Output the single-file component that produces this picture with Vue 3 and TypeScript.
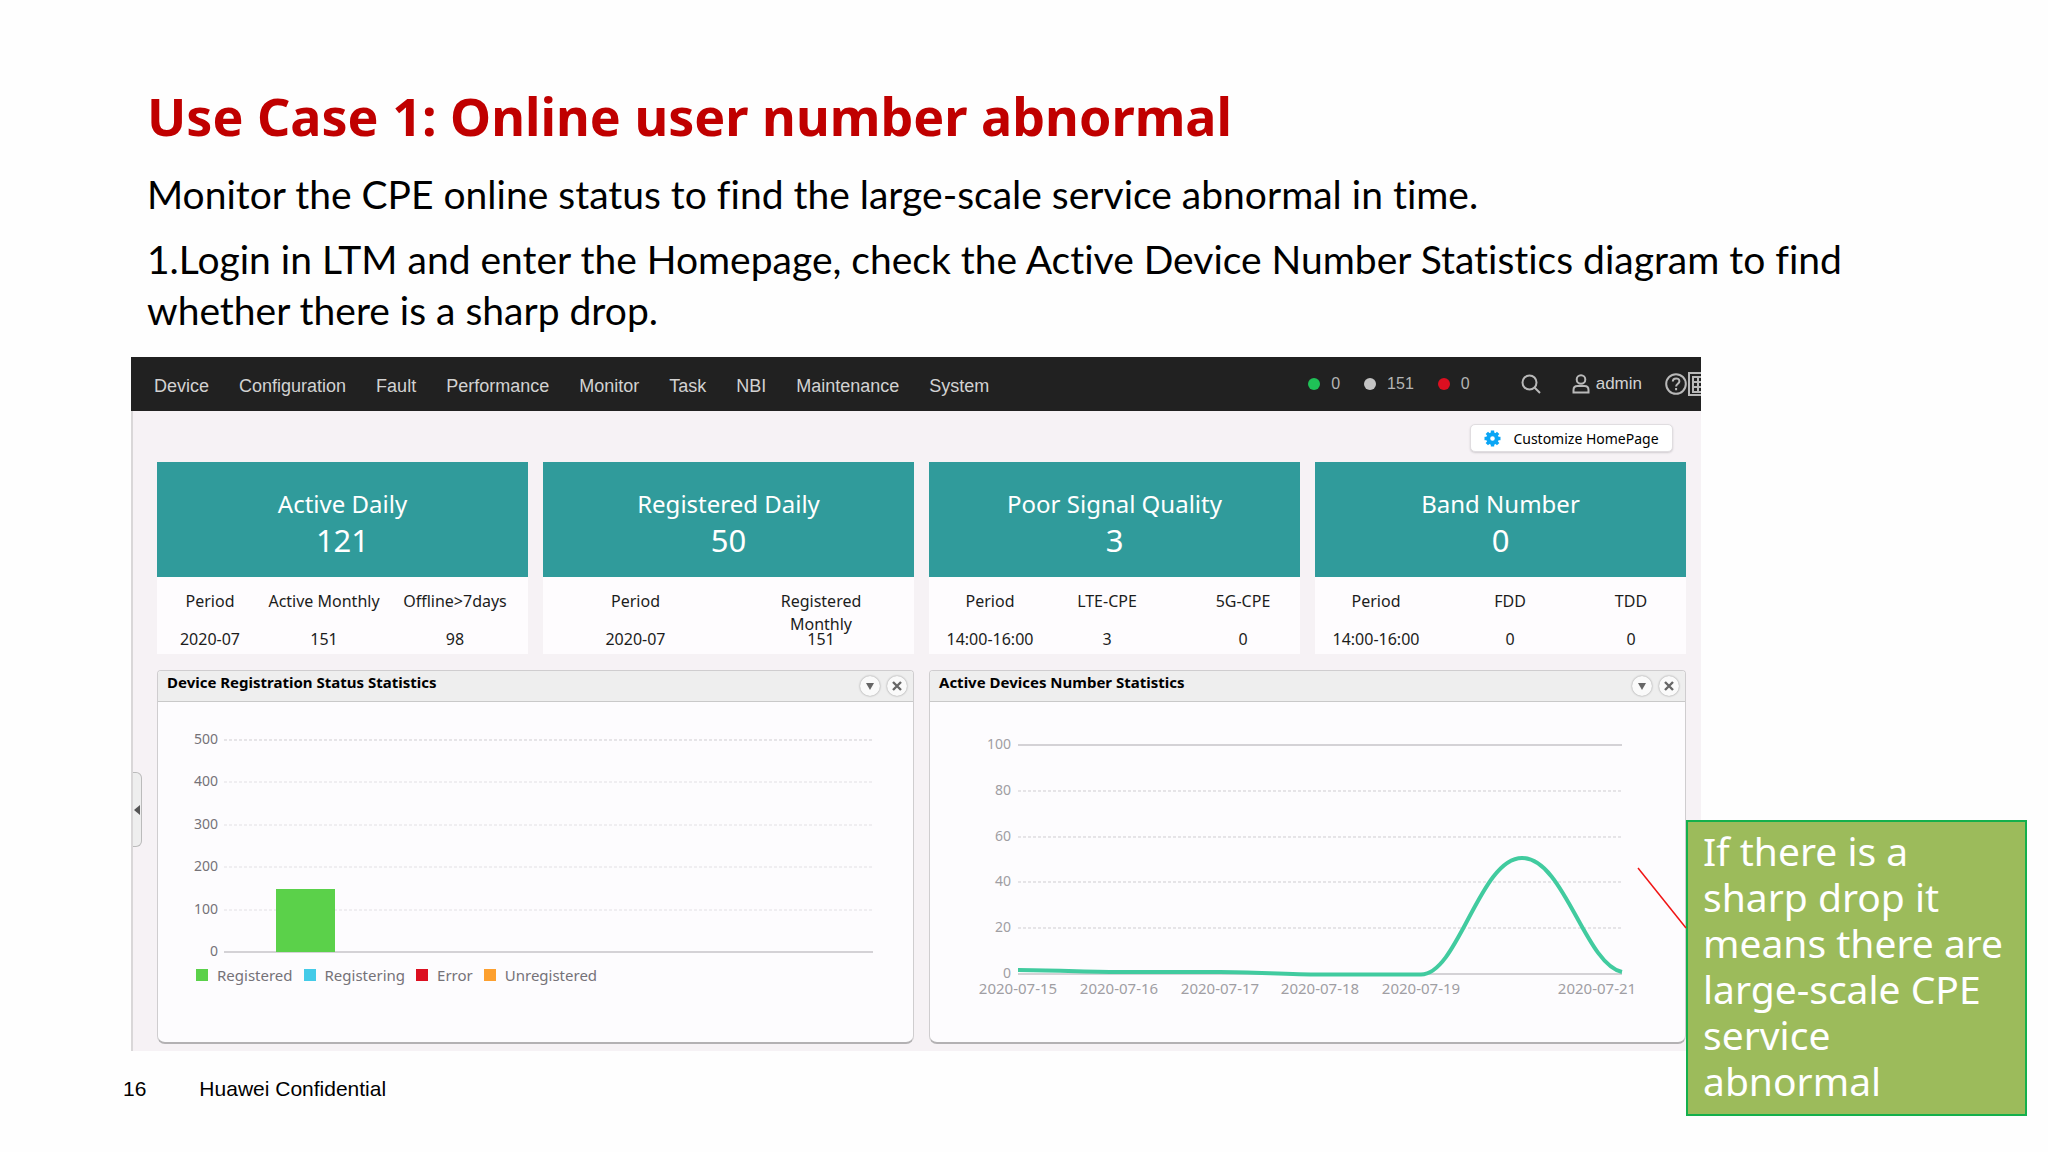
<script setup lang="ts">
interface Card {
  title: string
  total: number
  lead: number
  cols: { label: string; value: string; share: number }[]
}

const menu = ['Device', 'Configuration', 'Fault', 'Performance', 'Monitor', 'Task', 'NBI', 'Maintenance', 'System']

const alarms = [
  { color: '#1fc157', count: 0 },
  { color: '#c4c4c4', count: 151 },
  { color: '#dc0f20', count: 0 },
]

/* lead and share are parts of a card that is 371 units wide */
const CARD_UNITS = 371
const cards: Card[] = [
  {
    title: 'Active Daily',
    total: 121,
    lead: 0,
    cols: [
      { label: 'Period', value: '2020-07', share: 106 },
      { label: 'Active Monthly', value: '151', share: 122 },
      { label: 'Offline>7days', value: '98', share: 140 },
    ],
  },
  {
    title: 'Registered Daily',
    total: 50,
    lead: 0,
    cols: [
      { label: 'Period', value: '2020-07', share: 185 },
      { label: 'Registered Monthly', value: '151', share: 186 },
    ],
  },
  {
    title: 'Poor Signal Quality',
    total: 3,
    lead: 16,
    cols: [
      { label: 'Period', value: '14:00-16:00', share: 90 },
      { label: 'LTE-CPE', value: '3', share: 144 },
      { label: '5G-CPE', value: '0', share: 128 },
    ],
  },
  {
    title: 'Band Number',
    total: 0,
    lead: 0,
    cols: [
      { label: 'Period', value: '14:00-16:00', share: 122 },
      { label: 'FDD', value: '0', share: 146 },
      { label: 'TDD', value: '0', share: 96 },
    ],
  },
]

const pct = (n: number, of: number) => `${(n / of) * 100}%`
const tableUnits = (c: Card) => c.cols.reduce((sum, col) => sum + col.share, 0)

/* Registration bar chart */
const barTicks = [500, 400, 300, 200, 100, 0]
const barY = (v: number) => Math.round(250 - v * 0.425)
const legend = [
  { label: 'Registered', color: '#5bd14a' },
  { label: 'Registering', color: '#43cbe8' },
  { label: 'Error', color: '#dc0f20' },
  { label: 'Unregistered', color: '#fda02f' },
]

/* Active devices line chart */
const lineTicks = [100, 80, 60, 40, 20, 0]
const lineY = (v: number) => Math.round(272 - v * 2.29)
const dates = [
  { text: '2020-07-15', x: 88 },
  { text: '2020-07-16', x: 189 },
  { text: '2020-07-17', x: 290 },
  { text: '2020-07-18', x: 390 },
  { text: '2020-07-19', x: 491 },
  { text: '2020-07-21', x: 667 },
]
</script>

<template>
  <main class="slide">
    <header class="intro">
      <h1>Use Case 1: Online user number abnormal</h1>
      <p>Monitor the CPE online status to find the large-scale service abnormal in time.</p>
      <p>1.Login in LTM and enter the Homepage, check the Active Device Number Statistics diagram to find whether there is a sharp drop.</p>
    </header>

    <section class="stage">
      <div class="app">
        <nav class="bar">
          <ul class="menu">
            <li v-for="m in menu" :key="m"><a href="#">{{ m }}</a></li>
          </ul>
          <ul class="alarms">
            <li v-for="(a, i) in alarms" :key="i"><i :style="{ background: a.color }"></i>{{ a.count }}</li>
          </ul>
          <button class="tool search" type="button" aria-label="Search">
            <svg width="20" height="20" viewBox="0 0 20 20"><circle cx="8.500" cy="8.500" r="7" /><path d="M13.500 13.500 19 19" /></svg>
          </button>
          <button class="tool user" type="button">
            <svg width="18" height="20" viewBox="0 0 18 20"><circle cx="9" cy="5.500" r="4.300" /><path d="M1.500 18.500V16c0-2.500 1.500-4 4-4h7c2.500 0 4 1.500 4 4v2.500z" /></svg>
            admin
          </button>
          <button class="tool help" type="button" aria-label="Help">
            <svg width="22" height="22" viewBox="0 0 22 22"><circle cx="11" cy="11" r="9.800" /><path d="M7.800 8.600c0-4.200 6.600-4.200 6.600-.4 0 2.400-3.300 2.600-3.300 5.300M11.100 15v2.200" /></svg>
          </button>
          <button class="tool" type="button" aria-label="Applications">
            <svg width="13" height="24" viewBox="0 0 13 24"><path d="M14 1H1v22h13" /><path d="M4 5h9M4 10h9M4 15h9M4 20h9M5 4v15M10 4v15" /></svg>
          </button>
        </nav>

        <div class="home">
          <button class="fold" type="button" aria-label="Collapse sidebar">
            <svg width="6" height="10" viewBox="0 0 6 10"><path d="M6 0v10L0 5z" fill="#555" /></svg>
          </button>

          <div class="actions">
            <button class="customize" type="button">
              <svg width="17" height="17" viewBox="-8.500 -8.500 17 17">
                <path v-for="n in 4" :key="n" d="M0-8V8" :transform="`rotate(${n * 45})`" stroke="#0aa5f5" stroke-width="3.400" />
                <circle r="4.300" fill="#fff" stroke="#0aa5f5" stroke-width="4" />
              </svg>
              Customize HomePage
            </button>
          </div>

          <div class="cards">
            <article v-for="c in cards" :key="c.title" class="card">
              <div class="card-head">
                <h2>{{ c.title }}</h2>
                <strong>{{ c.total }}</strong>
              </div>
              <table :style="{ marginLeft: pct(c.lead, CARD_UNITS), width: pct(tableUnits(c), CARD_UNITS) }">
                <colgroup>
                  <col v-for="col in c.cols" :key="col.label" :style="{ width: pct(col.share, tableUnits(c)) }" />
                </colgroup>
                <thead>
                  <tr>
                    <th v-for="col in c.cols" :key="col.label" scope="col">
                      <div class="label" :class="{ narrow: c.cols.length === 2 }">{{ col.label }}</div>
                    </th>
                  </tr>
                </thead>
                <tbody>
                  <tr>
                    <td v-for="col in c.cols" :key="col.label">{{ col.value }}</td>
                  </tr>
                </tbody>
              </table>
            </article>
          </div>

          <div class="panels">
            <article class="panel">
              <header>
                <h3>Device Registration Status Statistics</h3>
                <button type="button" aria-label="Minimize"><svg width="20" height="20" viewBox="0 0 20 20"><path d="M6 7h8l-4 7z" fill="#666" /></svg></button>
                <button type="button" aria-label="Close"><svg width="20" height="20" viewBox="0 0 20 20"><path d="M6 6l8 8M14 6l-8 8" stroke="#666" stroke-width="2.400" /></svg></button>
              </header>
              <svg class="chart dark" viewBox="0 0 755 260">
                <g v-for="t in barTicks" :key="t">
                  <text x="60" :y="barY(t) + 4" text-anchor="end">{{ t }}</text>
                  <line x1="66" x2="715" :y1="barY(t)" :y2="barY(t)" :class="t === 0 ? 'solid' : t === 500 ? 'dash' : 'dash faint'" />
                </g>
                <rect x="118" y="187" width="59" height="63" fill="#5bd14a" />
              </svg>
              <ul class="legend">
                <li v-for="l in legend" :key="l.label"><i :style="{ background: l.color }"></i>{{ l.label }}</li>
              </ul>
            </article>

            <article class="panel">
              <header>
                <h3>Active Devices Number Statistics</h3>
                <button type="button" aria-label="Minimize"><svg width="20" height="20" viewBox="0 0 20 20"><path d="M6 7h8l-4 7z" fill="#666" /></svg></button>
                <button type="button" aria-label="Close"><svg width="20" height="20" viewBox="0 0 20 20"><path d="M6 6l8 8M14 6l-8 8" stroke="#666" stroke-width="2.400" /></svg></button>
              </header>
              <svg class="chart" viewBox="0 0 755 300">
                <g v-for="t in lineTicks" :key="t">
                  <text x="81" :y="lineY(t) + 4" text-anchor="end">{{ t }}</text>
                  <line x1="88" x2="692" :y1="lineY(t)" :y2="lineY(t)" :class="t % 100 === 0 ? 'solid' : 'dash'" />
                </g>
                <text v-for="d in dates" :key="d.text" class="date" :x="d.x" y="292" text-anchor="middle">{{ d.text }}</text>
                <path class="curve" d="M88 268C122 268 155 270 189 270H290C323 270 357 272.500 390 272.500H491C528 272.500 550 156 592 156C634 156 655 262 692 270" />
              </svg>
            </article>
          </div>
        </div>
      </div>

      <aside class="callout">
        <svg class="leader" width="50" height="62" viewBox="0 0 50 62"><path d="M1 1 49 61" stroke="#f01414" stroke-width="1.500" /></svg>
        If there is a sharp drop it means there are large-scale CPE service abnormal
      </aside>
    </section>

    <footer class="foot"><span>16</span><span>Huawei Confidential</span></footer>
  </main>
</template>

<style>
body {
  background: #fefefe;
}
</style>

<style scoped>
.slide {
  min-height: 100vh;
  padding-top: 79px;
  box-sizing: border-box;
  color: #000;
  font-family: "Noto Sans", "Open Sans", sans-serif;
}
ul {
  display: flex;
  margin: 0;
  padding: 0;
  list-style: none;
}
button {
  margin: 0;
  padding: 0;
  border: 0;
  background: none;
  font: inherit;
  color: inherit;
}
svg {
  display: block;
  fill: none;
}
.intro {
  margin: 0 147px;
}
h1 {
  margin: 0 0 16px;
  font-size: 52px;
  line-height: 74px;
  font-weight: 700;
  color: #c00000;
}
.intro p {
  margin: 0 0 14px;
  font-family: Lato, Carlito, sans-serif;
  font-size: 39px;
  line-height: 51px;
  font-variant-ligatures: none;
}
.stage {
  position: relative;
  margin: 21px 347px 0 131px;
}
.bar {
  display: flex;
  align-items: center;
  height: 54px;
  padding-left: 23px;
  background: #212121;
  color: #d2d2d2;
  font-family: "Liberation Sans", Arial, sans-serif;
}
.menu {
  flex: 1;
  gap: 30px;
  padding-top: 4px;
  font-size: 18px;
  line-height: 24px;
}
.menu a {
  color: inherit;
  text-decoration: none;
}
.alarms {
  gap: 24px;
  margin-right: 51px;
  font-size: 16px;
  color: #b4b4b4;
}
.alarms li {
  display: flex;
  align-items: center;
  gap: 11px;
}
.alarms i {
  width: 12px;
  height: 12px;
  border-radius: 50%;
}
.tool {
  display: flex;
  align-items: center;
  gap: 6px;
  font-size: 17px;
}
.tool svg {
  stroke: #b9b9b9;
  stroke-width: 2;
}
.search {
  margin-right: 31px;
}
.user {
  margin-right: 23px;
}
.help {
  margin-right: 1px;
}
.home {
  position: relative;
  padding: 13px 15px 7px 24px;
  border-left: 2px solid #d9d7d8;
  background: #f6f2f5;
}
.fold {
  position: absolute;
  left: 0;
  top: 361px;
  display: flex;
  align-items: center;
  justify-content: flex-end;
  width: 9px;
  height: 75px;
  padding-right: 1px;
  border: 1px solid #bbb;
  border-left: 0;
  border-radius: 0 6px 6px 0;
  background: #eee;
  box-sizing: border-box;
}
.actions {
  display: flex;
  justify-content: flex-end;
  margin: 0 13px 10px 0;
}
.customize {
  display: flex;
  align-items: center;
  justify-content: center;
  gap: 12px;
  min-width: 203px;
  height: 28px;
  border: 1px solid #e0dde0;
  border-radius: 5px;
  background: #fff;
  box-shadow: 0 1px 2px #d0ccd0;
  box-sizing: border-box;
  font-size: 14px;
}
.cards {
  display: grid;
  grid-template-columns: repeat(4, minmax(0, 1fr));
  gap: 15px;
}
.card {
  height: 192px;
  background: #fefcfe;
}
.card-head {
  height: 115px;
  padding-top: 25px;
  box-sizing: border-box;
  background: #309b9b;
  color: #fff;
  text-align: center;
}
h2 {
  margin: 0;
  font-size: 24px;
  line-height: 34px;
  font-weight: 400;
}
.card strong {
  display: block;
  font-size: 31px;
  line-height: 38px;
  font-weight: 400;
}
table {
  margin-top: 13px;
  border-collapse: collapse;
  table-layout: fixed;
  font-size: 16px;
  line-height: 23px;
  text-align: center;
  color: #1c1c1c;
}
th {
  height: 38px;
  padding: 0;
  font-weight: 400;
  vertical-align: top;
}
td {
  height: 23px;
  padding: 0;
}
.label {
  height: 23px;
  white-space: nowrap;
}
.narrow {
  padding: 0 40px;
  white-space: normal;
}
.panels {
  display: grid;
  grid-template-columns: repeat(2, minmax(0, 1fr));
  gap: 15px;
  margin-top: 16px;
}
.panel {
  min-height: 374px;
  box-sizing: border-box;
  border: 1px solid #cfcdcf;
  border-bottom: 2px solid #b3b1b3;
  border-radius: 4px 4px 8px 8px;
  background: #fdfcfe;
}
.panel header {
  display: flex;
  align-items: center;
  gap: 7px;
  height: 31px;
  padding: 0 6px 0 9px;
  border-bottom: 1px solid #c9c9c9;
  border-radius: 3px 3px 0 0;
  box-sizing: border-box;
  background: #eee;
}
h3 {
  flex: 1;
  margin: 0 0 8px;
  font-size: 15px;
  line-height: 20px;
  font-weight: 700;
}
.panel header button {
  border-radius: 50%;
  background: #fafafa;
  box-shadow: 0 0 2px #888;
}
.chart {
  width: 100%;
  height: auto;
}
.chart text {
  fill: #a09ea3;
  font-size: 14px;
}
.chart .date {
  font-size: 15px;
}
.chart.dark text {
  fill: #757278;
}
.solid {
  stroke: #d4d2d6;
  stroke-width: 2;
}
.dash {
  stroke: #cfcdd1;
  stroke-dasharray: 3 2;
}
.faint {
  stroke: #e2e0e4;
}
.curve {
  stroke: #41cb9f;
  stroke-width: 4;
}
.legend {
  gap: 11px;
  padding: 3px 0 0 38px;
  font-size: 15px;
  line-height: 20px;
  color: #757278;
}
.legend li {
  display: flex;
  align-items: center;
  gap: 9px;
}
.legend i {
  width: 12px;
  height: 12px;
}
.callout {
  position: absolute;
  top: 463px;
  left: calc(100% - 15px);
  width: 341px;
  padding: 6px 16px 10px 15px;
  border: 2px solid #14b04c;
  box-sizing: border-box;
  background: #9cbb5b;
  color: #fff;
  font-size: 39px;
  line-height: 46px;
}
.leader {
  position: absolute;
  left: -51px;
  top: 45px;
}
.foot {
  display: flex;
  gap: 53px;
  margin: 25px 0 0 123px;
  font-family: "Liberation Sans", Arial, sans-serif;
  font-size: 21px;
  line-height: 26px;
}
</style>
